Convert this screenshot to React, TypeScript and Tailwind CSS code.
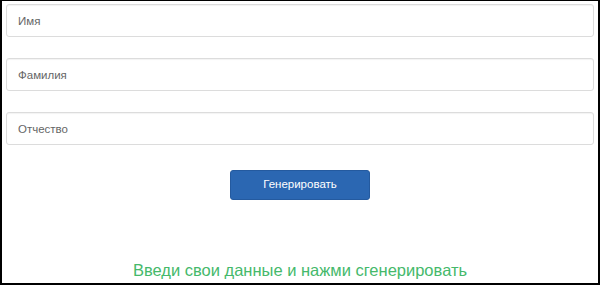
export default function App() {
  const fields = ["Имя", "Фамилия", "Отчество"];

  return (
    <div className="h-[285px] w-[600px] overflow-hidden border-x-2 border-b-2 border-t border-black bg-white font-['Liberation_Sans',Arial,sans-serif]">
      <div className="flex flex-col gap-[21px] px-1 pt-[3px]">
        {fields.map((f) => (
          <input
            key={f}
            placeholder={f}
            className="h-[33px] w-full rounded-[3px] border border-[#dcdcdc] px-[11px] text-[11.5px] text-[#555] placeholder:text-[#666] shadow-[inset_0_1px_1px_rgba(0,0,0,0.05)] outline-none"
          />
        ))}
      </div>
      <div className="mt-[25px] flex justify-center">
        <button className="h-[30px] w-[140px] rounded-[3px] border border-[#245a9f] bg-[#2b67b2] text-[11.5px] text-white">
          Генерировать
        </button>
      </div>
      <p className="mt-[60px] text-center text-[16.5px] leading-5 text-[#45b96b]">
        Введи свои данные и нажми сгенерировать
      </p>
    </div>
  );
}
